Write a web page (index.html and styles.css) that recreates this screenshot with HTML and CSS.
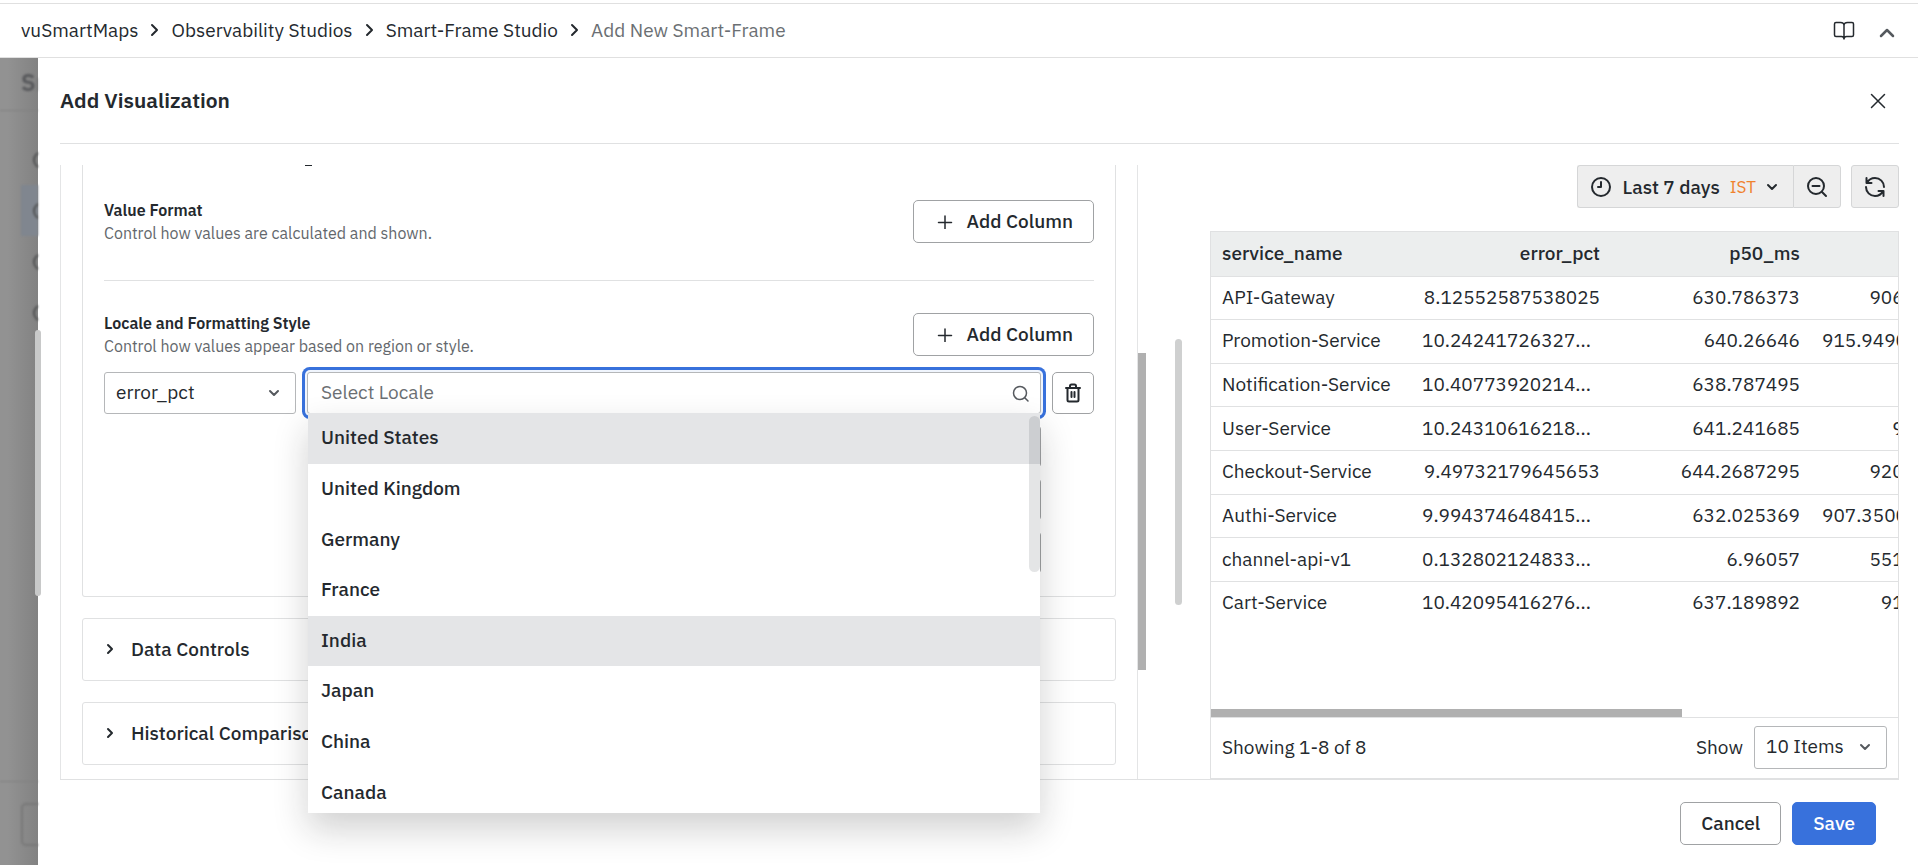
FILE: index.html
```
<!DOCTYPE html>
<html lang="en">
  <head>
    <meta charset="utf-8">
    <meta name="viewport" content="width=device-width,initial-scale=1">
    <link rel="stylesheet" href="styles.css">
    <title>Add New Smart-Frame</title>
  </head>
  <body>
    <header class="topbar">
      <nav class="breadcrumb" aria-label="Breadcrumb">
        <a href="#">vuSmartMaps</a>
        <svg class="sep" viewBox="0 0 11 14"><path d="M3 2l5 5-5 5"/></svg>
        <a href="#">Observability Studios</a>
        <svg class="sep" viewBox="0 0 11 14"><path d="M3 2l5 5-5 5"/></svg>
        <a href="#">Smart-Frame Studio</a>
        <svg class="sep" viewBox="0 0 11 14"><path d="M3 2l5 5-5 5"/></svg>
        <span class="current">Add New Smart-Frame</span>
      </nav>
      <div class="topbar-actions">
        <button type="button" class="icon-button" aria-label="Docs">
          <svg class="thin" width="22" height="20" viewBox="0 0 22 20"><path d="M11 4.500C11 2.500 9.500 1.500 7.500 1.500H3Q1.500 1.500 1.500 3V14Q1.500 15.500 3 15.500H8.500C10 15.500 11 16.500 11 18C11 16.500 12 15.500 13.500 15.500H19Q20.500 15.500 20.500 14V3Q20.500 1.500 19 1.500H14.500C12.500 1.500 11 2.500 11 4.500V18"/></svg>
        </button>
        <button type="button" class="icon-button" aria-label="Collapse">
          <svg class="grey" width="16" height="16" viewBox="0 0 16 16"><path stroke-width="2.500" d="M2 13l6-6 6 6"/></svg>
        </button>
      </div>
    </header>

    <div class="layout">
      <!-- page under the drawer, dimmed -->
      <aside class="backdrop" aria-hidden="true">
        <div class="backdrop-page">
          <div class="backdrop-title">Sm</div>
          <div class="backdrop-steps">
            <div class="step"><i></i></div>
            <div class="step active"><i></i></div>
            <div class="step"><i></i></div>
            <div class="step"><i></i></div>
          </div>
          <div class="backdrop-footer"><div class="backdrop-button"></div></div>
        </div>
        <div class="page-thumb"></div>
      </aside>

      <main class="drawer">
        <div class="drawer-header">
          <h1>Add Visualization</h1>
          <button type="button" class="icon-button" aria-label="Close">
            <svg class="thin" width="16" height="16" viewBox="0 0 16 16"><path d="M1.500 1.500l13 13M14.500 1.500l-13 13"/></svg>
          </button>
        </div>

        <div class="drawer-body">
          <section class="config">
            <div class="panel panel-open">
              <div class="clipped-heading"></div>
              <div class="setting">
                <div>
                  <h2>Value Format</h2>
                  <p>Control how values are calculated and shown.</p>
                </div>
                <button type="button" class="button add">
                  <svg class="thin" width="16" height="16" viewBox="0 0 16 16"><path d="M8 3v13M1.500 9.500h13"/></svg>
                  Add Column
                </button>
              </div>
              <hr>
              <div class="setting">
                <div>
                  <h2>Locale and Formatting Style</h2>
                  <p>Control how values appear based on region or style.</p>
                </div>
                <button type="button" class="button add">
                  <svg class="thin" width="16" height="16" viewBox="0 0 16 16"><path d="M8 3v13M1.500 9.500h13"/></svg>
                  Add Column
                </button>
              </div>
              <div class="locale-row">
                <div class="select-box column-select">
                  <select aria-label="Column"><option>error_pct</option></select>
                  <svg class="grey" width="12" height="8" viewBox="0 0 12 8"><path d="M2 2l4 4 4-4"/></svg>
                </div>
                <div class="locale-field">
                  <input type="text" placeholder="Select Locale" aria-label="Locale">
                  <svg class="grey thin" width="18" height="18" viewBox="0 0 18 18"><circle cx="8" cy="8" r="6.500"/><path d="M13 13l3 3"/></svg>
                  <div class="menu">
                    <ul role="listbox">
                      <li role="option" class="selected">United States</li>
                      <li role="option">United Kingdom</li>
                      <li role="option">Germany</li>
                      <li role="option">France</li>
                      <li role="option" class="selected">India</li>
                      <li role="option">Japan</li>
                      <li role="option">China</li>
                      <li role="option">Canada</li>
                    </ul>
                    <div class="menu-thumb"></div>
                  </div>
                </div>
                <button type="button" class="button trash" aria-label="Delete">
                  <svg width="18" height="20" viewBox="0 0 18 20"><path d="M2 5h14M3.500 5v12q0 1.500 1.500 1.500h8q1.500 0 1.500-1.500V5M6 5V3q0-1.500 1.500-1.500h3Q12 1.500 12 3v2M7.500 9v5M10.500 9v5"/></svg>
                </button>
              </div>
              <div class="covered-rows"><div></div><div></div><div></div></div>
            </div>
            <button type="button" class="panel panel-closed">
              <svg width="8" height="12" viewBox="0 0 8 12"><path d="M2 2l4 4-4 4"/></svg>
              Data Controls
            </button>
            <button type="button" class="panel panel-closed">
              <svg width="8" height="12" viewBox="0 0 8 12"><path d="M2 2l4 4-4 4"/></svg>
              Historical Comparison
            </button>
          </section>
          <div class="config-scroll"><div class="config-thumb"></div></div>
          <div class="preview-scroll"><div class="preview-thumb"></div></div>

          <section class="preview">
            <div class="toolbar">
              <div class="time-group">
                <button type="button" class="tool range">
                  <svg width="22" height="22" viewBox="0 0 22 22"><circle cx="11" cy="11" r="9"/><path d="M11 6v5H8"/></svg>
                  Last 7 days <span class="zone">IST</span>
                  <svg width="12" height="8" viewBox="0 0 12 8"><path d="M2 2l4 4 4-4"/></svg>
                </button>
                <button type="button" class="tool" aria-label="Zoom out">
                  <svg width="22" height="22" viewBox="0 0 22 22"><circle cx="10" cy="10" r="8"/><path d="M6.500 10h7M16 16l4 4"/></svg>
                </button>
              </div>
              <button type="button" class="tool refresh" aria-label="Refresh">
                <svg width="22" height="22" viewBox="0 0 22 22"><path d="M2.500 2v5h5M3 7C4.500 4 7.500 2 11 2c5 0 9 4 9 9M19.500 20v-5h-5M19 15c-1.500 3-4.500 5-8 5-5 0-9-4-9-9"/></svg>
              </button>
            </div>

            <div class="table-box">
              <div class="table-scroll">
                <table>
                  <thead>
                    <tr><th>service_name</th><th>error_pct</th><th>p50_ms</th><th>p95_ms</th></tr>
                  </thead>
                  <tbody>
                    <tr><td>API-Gateway</td><td>8.12552587538025</td><td>630.786373</td><td>906.48215305</td></tr>
                    <tr><td>Promotion-Service</td><td class="cut">10.24241726327...</td><td>640.26646</td><td class="cut">915.949000205...</td></tr>
                    <tr><td>Notification-Service</td><td class="cut">10.40773920214...</td><td>638.787495</td><td></td></tr>
                    <tr><td>User-Service</td><td class="cut">10.24310616218...</td><td>641.241685</td><td>912.954125</td></tr>
                    <tr><td>Checkout-Service</td><td>9.49732179645653</td><td>644.2687295</td><td>920.31745215</td></tr>
                    <tr><td>Authi-Service</td><td class="cut">9.994374648415...</td><td>632.025369</td><td class="cut">907.350060154...</td></tr>
                    <tr><td>channel-api-v1</td><td class="cut">0.132802124833...</td><td>6.96057</td><td>551.20415325</td></tr>
                    <tr><td>Cart-Service</td><td class="cut">10.42095416276...</td><td>637.189892</td><td>912.0415275</td></tr>
                  </tbody>
                </table>
              </div>
              <div class="table-thumb"></div>
              <div class="table-footer">
                <span>Showing 1-8 of 8</span>
                <label for="page-size">Show</label>
                <div class="select-box page-size">
                  <select id="page-size"><option>10 Items</option></select>
                  <svg class="grey" width="12" height="8" viewBox="0 0 12 8"><path d="M2 2l4 4 4-4"/></svg>
                </div>
              </div>
            </div>
          </section>
        </div>

        <div class="drawer-footer">
          <button type="button" class="button">Cancel</button>
          <button type="button" class="button primary">Save</button>
        </div>
      </main>
    </div>
  </body>
</html>
```

FILE: styles.css
```
* {
  box-sizing: border-box;
}
body {
  display: flex;
  flex-direction: column;
  height: 100vh;
  margin: 0;
  overflow: hidden;
  font-family: "IBM Plex Sans", "Noto Sans", sans-serif;
  font-size: 19px;
  line-height: 24px;
  color: #24292e;
  background-color: #fff;
}
button, input, select {
  font: inherit;
  color: inherit;
}
svg {
  flex: none;
  fill: none;
  stroke: #24292e;
  stroke-width: 2;
  stroke-linecap: round;
  stroke-linejoin: round;
}
svg.grey {
  stroke: #55595e;
}
svg.thin {
  stroke-width: 1.5;
}
h1, h2, p, ul {
  margin: 0;
  padding: 0;
}
.topbar {
  display: flex;
  flex: none;
  justify-content: space-between;
  align-items: center;
  height: 55px;
  margin-top: 3px;
  padding: 0 23px 0 21px;
  border-top: 1px solid #e0e0e0;
  border-bottom: 1px solid #e0e0e0;
}
.breadcrumb {
  display: flex;
  align-items: center;
  gap: 11px;
  padding-bottom: 2px;
}
.breadcrumb a {
  color: inherit;
  text-decoration: none;
}
.breadcrumb .current {
  color: #6b6f73;
}
.sep {
  width: 11px;
  height: 14px;
}
.topbar-actions {
  display: flex;
  align-items: center;
  gap: 24px;
}
.icon-button {
  display: flex;
  padding: 0;
  border: 0;
  background: none;
}
.layout {
  display: flex;
  flex: 1;
  min-height: 0;
}

/* dimmed page */
.backdrop {
  position: relative;
  flex: none;
  width: 38px;
  background-image: linear-gradient(to right, #929292 20%, #828282);
}
.backdrop-page {
  display: flex;
  flex-direction: column;
  height: 100%;
  overflow: hidden;
  filter: blur(1px);
}
.backdrop-title {
  height: 53px;
  padding: 12px 0 0 21px;
  border-bottom: 1px solid #808080;
  font-size: 24px;
  font-weight: 600;
  color: #56575a;
}
.backdrop-steps {
  flex: 1;
  padding: 23px 0 0 21px;
}
.step {
  display: flex;
  align-items: center;
  height: 51px;
  padding-left: 12px;
}
.step.active {
  background-color: #80868f;
}
.step i {
  flex: none;
  width: 18px;
  height: 18px;
  border: 2px solid #4e4f50;
  border-radius: 50%;
}
.backdrop-footer {
  height: 84px;
  padding: 21px 0 0 21px;
  border-top: 1px solid #808080;
}
.backdrop-button {
  width: 60px;
  height: 43px;
  border: 2px solid #787878;
  border-radius: 5px;
}
.page-thumb {
  position: absolute;
  top: 272px;
  right: -3px;
  width: 6px;
  height: 266px;
  border-radius: 3px;
  background-color: #c8c9c9;
}

.drawer {
  display: flex;
  flex: 1;
  flex-direction: column;
  min-width: 0;
  padding: 0 19px 0 22px;
}
.drawer-header {
  display: flex;
  flex: none;
  justify-content: space-between;
  align-items: center;
  height: 86px;
  padding-right: 13px;
  border-bottom: 1px solid #e0e1e2;
}
h1 {
  padding-bottom: 2px;
  font-size: 21px;
  font-weight: 600;
}
.drawer-body {
  display: grid;
  flex: 1;
  grid-template-columns: 1078fr 37px 35px 689fr;
  grid-template-rows: 100%;
  min-height: 0;
  margin-top: 21px;
  border-bottom: 1px solid #e0e1e2;
}
.config {
  min-width: 0;
  padding: 0 21px;
  border-left: 1px solid #e4e5e6;
  border-right: 1px solid #e4e5e6;
}
.panel {
  border: 1px solid #e0e1e2;
  border-radius: 3px;
  background-color: #fff;
}
.panel-open {
  height: 432px;
  padding: 0 21px;
  border-top: 0;
  border-radius: 0 0 3px 3px;
}
/* tail of the heading that is scrolled away */
.clipped-heading {
  width: 7px;
  height: 1px;
  margin-left: 201px;
  background-color: #24292e;
}
.setting {
  display: flex;
  justify-content: space-between;
  align-items: center;
  height: 43px;
  margin-top: 34px;
}
h2 {
  font-size: 16px;
  font-weight: 600;
  line-height: 22px;
}
.setting p {
  font-size: 16px;
  line-height: 24px;
  color: #63676c;
}
hr {
  height: 1px;
  margin: 37px 0 0;
  border: 0;
  background-color: #e0e1e2;
}
.setting + hr + .setting {
  margin-top: 32px;
}
.button {
  display: flex;
  justify-content: center;
  align-items: center;
  height: 43px;
  padding: 0 20px 2px;
  border: 1px solid #a0a2a4;
  border-radius: 5px;
  font-weight: 500;
  background-color: #fff;
}
.button.add {
  gap: 14px;
  padding-left: 23px;
}
.button.primary {
  border-color: #3871dc;
  color: #fff;
  background-color: #3871dc;
}
.button.trash {
  height: 42px;
  padding: 0;
}
.locale-row {
  display: grid;
  grid-template-columns: 192fr 734fr 42px;
  gap: 11px;
  height: 42px;
  margin-top: 16px;
}
.select-box {
  position: relative;
  display: flex;
  align-items: center;
}
.select-box select {
  width: 100%;
  height: 100%;
  padding: 0 11px 2px;
  border: 1px solid #b5b7b9;
  border-radius: 3px;
  appearance: none;
  background-color: #fff;
}
.select-box svg {
  position: absolute;
  right: 16px;
}
.locale-field {
  position: relative;
}
.locale-field input {
  display: block;
  width: 100%;
  height: 100%;
  padding: 0 40px 2px 13px;
  border: 1px solid #b5b7b9;
  border-radius: 3px;
  outline: 0;
  background-color: #fff;
  box-shadow: 0 0 0 2px #f0f5fd, 0 0 0 5px #3871dc;
}
.locale-field input::placeholder {
  color: #6b6f73;
  opacity: 1;
}
.locale-field > svg {
  position: absolute;
  top: 13px;
  right: 11px;
}
.menu {
  position: absolute;
  z-index: 1;
  top: 41px;
  left: 1px;
  right: 1px;
  height: 400px;
  overflow: hidden;
  background-color: #fff;
  box-shadow: 0 16px 33px rgba(24, 26, 27, .2);
}
.menu ul {
  display: grid;
  grid-template-rows: repeat(8, 1fr);
  height: 405px;
  list-style: none;
}
.menu li {
  display: flex;
  align-items: center;
  padding: 0 13px 2px;
  font-weight: 500;
}
.menu li.selected {
  background-color: #e4e5e7;
}
.menu-thumb {
  position: absolute;
  top: 3px;
  right: 0;
  width: 11px;
  height: 156px;
  border-radius: 6px;
  background-color: rgba(36, 41, 46, .12);
}
.covered-rows {
  display: grid;
  gap: 12px;
  margin: 12px 53px 0 210px;
}
.covered-rows div {
  height: 41px;
  border: 1px solid #a0a2a4;
  border-radius: 3px;
}
.panel-closed {
  display: flex;
  align-items: center;
  gap: 17px;
  width: 100%;
  height: 63px;
  margin-top: 21px;
  padding: 0 23px 2px;
  font-weight: 500;
}
.config-scroll {
  padding-top: 188px;
}
.config-thumb {
  width: 8px;
  height: 317px;
  background-color: #b0b0b0;
}
.preview-scroll {
  padding-top: 174px;
}
.preview-thumb {
  width: 7px;
  height: 266px;
  border-radius: 4px;
  background-color: #cfd0d0;
}
.preview {
  display: flex;
  flex-direction: column;
  min-width: 0;
}
.toolbar {
  display: flex;
  flex: none;
  justify-content: flex-end;
  gap: 10px;
  height: 43px;
}
.time-group {
  display: flex;
}
.tool {
  display: flex;
  justify-content: center;
  align-items: center;
  width: 48px;
  padding: 0;
  border: 1px solid #d5d6d7;
  border-radius: 0 3px 3px 0;
  background-color: #eee;
}
.tool.range {
  gap: 10px;
  width: auto;
  padding: 0 15px 0 12px;
  border-right: 0;
  border-radius: 3px 0 0 3px;
  font-weight: 500;
}
.tool.refresh {
  border-radius: 3px;
}
.zone {
  font-size: 17px;
  font-weight: 400;
  color: #f0822d;
}
.table-box {
  display: flex;
  flex: 1;
  flex-direction: column;
  min-height: 0;
  margin-top: 23px;
  border: 1px solid #e0e1e2;
}
.table-scroll {
  flex: 1;
  min-height: 0;
  overflow: hidden;
}
table {
  width: 800px;
  height: 393px;
  border-collapse: collapse;
  table-layout: fixed;
}
th, td {
  height: 43px;
  padding: 0 11px 2px;
  border-bottom: 1px solid #e0e1e2;
  text-align: right;
  white-space: nowrap;
}
th {
  height: 44px;
  font-weight: 500;
  background-color: #eceeee;
}
th:first-child, td:first-child {
  text-align: left;
}
td.cut {
  text-align: left;
}
tbody tr:last-child td {
  border-bottom: 0;
}
.table-thumb {
  flex: none;
  width: 471px;
  height: 8px;
  background-color: #b0b0b0;
}
.table-footer {
  display: flex;
  flex: none;
  align-items: center;
  gap: 11px;
  height: 61px;
  padding: 0 11px 2px;
  border-top: 1px solid #e0e1e2;
}
.table-footer span {
  flex: 1;
}
.page-size {
  width: 133px;
  height: 43px;
}
.drawer-footer {
  display: flex;
  flex: none;
  justify-content: flex-end;
  gap: 11px;
  height: 85px;
  padding: 22px 23px 0 0;
}
```
